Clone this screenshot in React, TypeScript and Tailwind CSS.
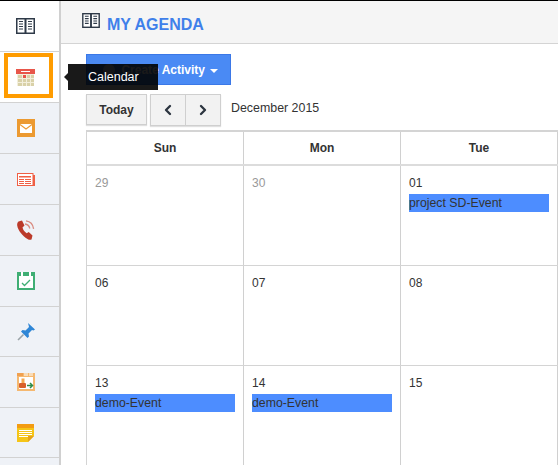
import { ChevronLeft, ChevronRight } from "lucide-react";
import type { ReactNode } from "react";

function BookIcon({ className }: { className: string }) {
  return (
    <svg viewBox="0 0 19 16" className={className}>
      <rect x="0.75" y="0.75" width="17.5" height="14.5" fill="#fff" stroke="#2f3a48" strokeWidth="1.5" />
      <rect x="8.500" y="0.5" width="2" height="15" fill="#2f3a48" />
      <path d="M3 3.500h4M3 6h4M3 8.500h4M3 11h4M12 3.500h4M12 6h4M12 8.500h4M12 11h4" stroke="#2f3a48" strokeWidth="1.200" />
    </svg>
  );
}

const CalendarIcon = (
  <svg viewBox="0 0 19 17" className="h-[17px] w-[19px]">
    <rect x="0" y="0" width="19" height="5" fill="#e8564a" />
    <rect x="5" y="2" width="9" height="1" fill="#fff" />
    <rect x="1" y="5" width="17" height="12" fill="#f3efdc" />
    <path d="M2 6h4v3H2zM7 6h3v3H7zM11 6h3v3h-3zM15 6h3v3h-3zM2 10h4v3H2zM7 10h3v3H7zM11 10h3v3h-3zM15 10h3v3h-3zM2 14h4v3H2zM7 14h3v3H7zM11 14h3v3h-3zM15 14h3v3h-3z" fill="#d9d1a8" />
    <rect x="7" y="6" width="3" height="3" fill="#e8564a" />
  </svg>
);

const MailIcon = (
  <svg viewBox="0 0 18 18" className="h-[18px] w-[18px]">
    <rect width="18" height="18" fill="#ec9a31" />
    <rect x="3" y="5" width="12" height="9" fill="#fff" />
    <path d="M3 5.500 9 10l6-4.500" fill="none" stroke="#ec9a31" strokeWidth="1.100" />
  </svg>
);

const NewsIcon = (
  <svg viewBox="0 0 18 13" className="h-[13px] w-[18px]">
    <rect x="0.5" y="0.5" width="15.500" height="12" fill="#fff" stroke="#ef5f45" />
    <rect x="16" y="2" width="2" height="11" fill="#ef5f45" />
    <path d="M2 3h12v1.500H2zM2 6h5v1H2zM8 6h6v1H8zM2 8h5v1H2zM8 8h6v1H8zM2 10h5v1H2zM8 10h6v1H8z" fill="#ef5f45" />
  </svg>
);

const PhoneIcon = (
  <svg viewBox="0 0 18 20" className="h-5 w-[18px]">
    <path d="M1.500 1.500 5 .5l2.500 5-2 2c.6 2.400 2 4.400 4.200 5.700l2-1.300 3.800 3.500-1 4c-1 .5-2.400.5-3.600-.2C5.500 16.200 1 10.500.2 5.500 0 4 .4 2.500 1.500 1.500Z" fill="#bb3a2a" />
    <path d="M8 4c2.500.3 4.300 2 4.800 4.500M9 .8c3.800.5 7 3.500 7.600 8" fill="none" stroke="#d98b80" strokeWidth="1.300" />
  </svg>
);

const CheckCalIcon = (
  <svg viewBox="0 0 18 18" className="h-[18px] w-[18px]">
    <rect width="18" height="18" fill="#3fae74" />
    <rect x="2" y="4" width="14" height="12" fill="#fff" />
    <rect x="4" y="0" width="2" height="5" fill="#fff" />
    <rect x="12" y="0" width="2" height="5" fill="#fff" />
    <path d="m5 11 2.500 2.500L13 8" fill="none" stroke="#3fae74" strokeWidth="1.300" />
  </svg>
);

const PinIcon = (
  <svg viewBox="0 0 18 18" className="h-[18px] w-[18px]">
    <path d="M11 0 18 6.500l-1.500 1-1.500-.5-3.500 3.500.5 3-1.500 1.500L4 8.500 5.500 7l3 .5L12 4l-.5-2Z" fill="#2f86d6" />
    <path d="M6.500 11.500 1 17" stroke="#9aa3a8" strokeWidth="1.600" />
  </svg>
);

const TransferIcon = (
  <svg viewBox="0 0 18 18" className="h-[18px] w-[18px]">
    <rect width="18" height="18" fill="#f5b870" />
    <rect x="0" y="0" width="6" height="3" fill="#f0a050" />
    <path d="M7 0h4v3H7zM12 0h4v3h-4z" fill="#f9dcb8" />
    <rect x="2" y="4" width="14" height="12" fill="#fff" />
    <rect x="4.500" y="5.500" width="3" height="5" fill="#f5a850" />
    <rect x="2" y="10" width="7" height="5" rx="1" fill="#d9602a" />
    <path d="M10 12.500h5M13 10l2.500 2.500L13 15" fill="none" stroke="#2e8b4a" strokeWidth="1.500" />
  </svg>
);

const NoteIcon = (
  <svg viewBox="0 0 17 18" className="h-[18px] w-[17px]">
    <path d="M0 0h17v12l-6 6H0Z" fill="#f5c518" />
    <rect width="17" height="4" fill="#f39c12" />
    <path d="M2 6.500h13M2 8.500h13M2 10.500h13M2 12.500h9" stroke="#fff" strokeWidth="1" />
    <path d="M17 12h-6v6Z" fill="#e8a21a" />
  </svg>
);

const SIDE_ITEMS: { key: string; icon: ReactNode; active?: boolean; h: string }[] = [
  { key: "agenda", icon: <BookIcon className="h-4 w-[19px]" />, active: true, h: "h-[51px]" },
  { key: "calendar", icon: CalendarIcon, active: true, h: "h-[51px]" },
  { key: "mail", icon: MailIcon, h: "h-[51px]" },
  { key: "news", icon: NewsIcon, h: "h-[51px]" },
  { key: "phone", icon: PhoneIcon, h: "h-[51px]" },
  { key: "task", icon: CheckCalIcon, h: "h-[51px]" },
  { key: "pin", icon: PinIcon, h: "h-[50px]" },
  { key: "transfer", icon: TransferIcon, h: "h-[51px]" },
  { key: "note", icon: NoteIcon, h: "h-[50px]" },
];

const WEEKS: { num: string; muted?: boolean; event?: string }[][] = [
  [{ num: "29", muted: true }, { num: "30", muted: true }, { num: "01", event: "project SD-Event" }],
  [{ num: "06" }, { num: "07" }, { num: "08" }],
  [{ num: "13", event: "demo-Event" }, { num: "14", event: "demo-Event" }, { num: "15" }],
];

export default function App() {
  return (
    <div className="relative flex h-[465px] w-[558px] overflow-hidden border-t border-black bg-white font-['Liberation_Sans',Arial,sans-serif] text-[#333]">
      <aside className="w-[61px] shrink-0 border-r-2 border-[#d0d0d0] bg-[#eff2f7]">
        {SIDE_ITEMS.map((item) => (
          <div
            key={item.key}
            className={`flex items-center justify-center border-b border-[#d2d2d2] pr-2 ${item.h} ${item.active ? "bg-white" : ""}`}
          >
            {item.icon}
          </div>
        ))}
      </aside>

      <main className="min-w-0 flex-1">
        <header className="flex h-[43px] items-start border-b border-[#d4d4d4] bg-[#f5f5f5] pl-[21px] pt-3">
          <BookIcon className="h-[15px] w-[18px]" />
          <h1 className="ml-[7px] mt-0.5 text-base font-bold leading-5 text-[#3f80ea]">MY AGENDA</h1>
        </header>

        <div className="pl-[25px] pt-2.5">
          <button className="flex h-[31px] w-[145px] items-center justify-end border border-[#3b78e7] bg-[#4a8af4] pr-3 text-xs font-bold text-white">
            <span className="mr-1.5 h-3 w-3 rounded-full bg-white/70" />
            Create Activity
            <span className="ml-[5px] mt-0.5 border-x-4 border-t-4 border-x-transparent border-t-white" />
          </button>

          <div className="mt-[9px] flex items-start">
            <button className="h-[31px] w-[61px] border border-[#cfcfcf] bg-[#f2f2f2] text-xs font-bold text-[#333] shadow-[0_1px_1px_rgba(0,0,0,0.12)]">
              Today
            </button>
            <div className="ml-[3px] flex h-8 w-[71px] border border-[#cfcfcf] bg-[#f2f2f2] shadow-[0_1px_1px_rgba(0,0,0,0.12)]">
              <span className="flex flex-1 items-center justify-center border-r border-[#cfcfcf]">
                <ChevronLeft className="h-4 w-4 text-[#2c3540]" strokeWidth={3.5} />
              </span>
              <span className="flex flex-1 items-center justify-center">
                <ChevronRight className="h-4 w-4 text-[#2c3540]" strokeWidth={3.5} />
              </span>
            </div>
            <span className="ml-2.5 mt-1.5 text-[12.4px] leading-4">December 2015</span>
          </div>

          <div className="mt-1 w-[472px] border-l border-t-2 border-[#d4d4d4]">
            <div className="grid h-[34px] grid-cols-[157px_157px_157px] border-b-2 border-[#dcdcdc]">
              {["Sun", "Mon", "Tue"].map((day) => (
                <div
                  key={day}
                  className="flex items-center justify-center border-r border-[#d0d0d0] text-xs font-bold text-[#333]"
                >
                  {day}
                </div>
              ))}
            </div>
            {WEEKS.map((week) => (
              <div key={week[0].num} className="grid h-[100px] grid-cols-[157px_157px_157px] border-b border-[#d4d4d4]">
                {week.map((cell) => (
                  <div key={cell.num} className="border-r border-[#d0d0d0] px-2 pt-[10px]">
                    <div className={`text-xs leading-[14px] ${cell.muted ? "text-[#999]" : "text-[#333]"}`}>{cell.num}</div>
                    {cell.event && (
                      <div className="mt-1 h-[18px] bg-[#4d8dff] text-[12.3px] leading-[18px] text-[#333]">{cell.event}</div>
                    )}
                  </div>
                ))}
              </div>
            ))}
          </div>
        </div>
      </main>

      <div className="absolute left-1 top-[52px] h-[45px] w-[49px] border-4 border-[#ff9c00]" />
      <div className="absolute left-[68px] top-[63px] flex h-[26px] w-[90px] items-center bg-black/90 pl-5 text-[12.5px] text-white">
        Calendar
        <span className="absolute -left-1 top-[9px] border-y-4 border-r-4 border-y-transparent border-r-black/90" />
      </div>
    </div>
  );
}
